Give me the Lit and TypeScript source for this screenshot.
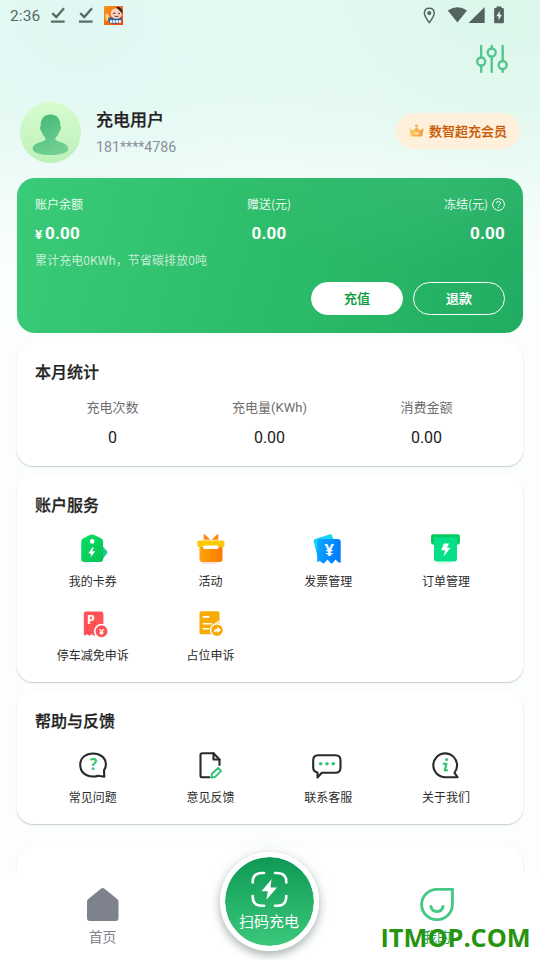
import { LitElement, html, css, svg, TemplateResult } from "lit";
import { customElement } from "lit/decorators.js";

interface Entry {
  label: string;
  icon: TemplateResult;
}

const icon = (body: TemplateResult) =>
  html`<svg class="icon" width="32" height="32" viewBox="0 0 32 32" fill="none">${body}</svg>`;

const services: Entry[] = [
  {
    label: "我的卡券",
    icon: icon(svg`
      <defs>
        <linearGradient id="tag" x1="0" y1="0" x2="1" y2="1"><stop stop-color="#05df68"/><stop offset="1" stop-color="#0bc252"/></linearGradient>
        <linearGradient id="tagShade" x1="0" y1="0" x2="1" y2="0"><stop stop-color="#9cc9ff" stop-opacity=".55"/><stop offset="1" stop-color="#fff" stop-opacity="0"/></linearGradient>
      </defs>
      <path d="M6 28h18l-4 3H9z" fill="url(#tagShade)"/>
      <path d="M25 12.500l5 5.500q.9 1.200 0 2.400L26.500 25q-1 1.500-2.500 2z" fill="#17cf92"/>
      <path d="M13.300 1.800q1.700-.8 3.400 0l7.500 3.700q1.900 1 1.900 3V26q0 3-3 3H7.200q-3 0-3-3V8.500q0-2 1.900-3z" fill="url(#tag)"/>
      <circle cx="15.200" cy="8.400" r="2.300" fill="#fff"/>
      <path d="M15.300 14.500l-4 6h3l-1 4 5-6.300h-3.200l1.800-3.700z" fill="#fff"/>`),
  },
  {
    label: "活动",
    icon: icon(svg`
      <defs><linearGradient id="gift" x1="0" y1="0" x2="1" y2="0"><stop stop-color="#ffa30c"/><stop offset="1" stop-color="#ff7a00"/></linearGradient></defs>
      <path d="M6 28h18l-4 3H8z" fill="#ffb7b0" opacity=".4"/>
      <path d="M8.700 1.600q0-1 .9-.4L15.500 6.800H8.700zM23.300 1.600q0-1-.9-.4L16.500 6.800h6.800z" fill="#ff8a12"/>
      <path d="M4.500 11h23v15q0 3-3 3h-17q-3 0-3-3z" fill="url(#gift)"/>
      <rect x="2.400" y="7.500" width="27" height="6.600" rx="1.500" fill="#ffc904"/>
      <rect x="8" y="12.500" width="15.600" height="3.500" rx="1.700" fill="#fff"/>`),
  },
  {
    label: "发票管理",
    icon: icon(svg`
      <defs><linearGradient id="bill" x1="0" y1="0" x2="1" y2=".3"><stop stop-color="#0fa9ff"/><stop offset="1" stop-color="#007dff"/></linearGradient></defs>
      <path d="M2.900 6L17.500 1.400q2-.5 2.700 1.300L25 18 6.500 28.500 1.700 8.500q-.4-1.900 1.200-2.500z" fill="#17d5f5"/>
      <path d="M9 6h16.700q3 0 3 3v20.800l-2-.4-3.200-3-3.100 3.800h-1.700l-3.200-3.800-3.200 3.800h-1.700l-3.100-2.500-1.400 1.200-.9-.2V9q0-3 2.800-3z" fill="url(#bill)"/>
      <text class="yen" x="17.200" y="22.800" font-size="16.500">¥</text>`),
  },
  {
    label: "订单管理",
    icon: icon(svg`
      <path d="M6 28h19l-8 3.500H8z" fill="#b7f7dd" opacity=".45"/>
      <path d="M2.900 1.300h25q2 0 2 2v5.500q0 3-3 3H4q-3 0-3-3V3.300q0-2 1.900-2z" fill="#05cb5c"/>
      <path d="M4 4.300h23v21.500q0 2.700-2.700 2.700H6.700Q4 28.500 4 25.800z" fill="#05df87"/>
      <path d="M14 10.500h5l-2 4.300h3.600l-7 8.700 1.500-6.200h-4z" fill="#fff"/>`),
  },
  {
    label: "停车减免申诉",
    icon: icon(svg`
      <path d="M9 4.500h15q2.400 0 2.400 2.400V28l-2-.5-2.300 1.300-2.400-1.300-2.500 1.300-2.400-1.500-2.400 1.500-2.300-1.500-2 1.200-1.300-.4V6.900q0-2.400 2.200-2.400z" fill="#ff5257"/>
      <text class="mark" x="13.800" y="17.300" font-size="12.500">P</text>
      <circle cx="24.500" cy="24.300" r="6.800" fill="#ff5257" stroke="#fff" stroke-width="1.700"/>
      <text class="mark" x="24.500" y="27.600" font-size="9">¥</text>`),
  },
  {
    label: "占位申诉",
    icon: icon(svg`
      <rect x="4.500" y="4.200" width="20" height="23" rx="2" fill="#f8aa05"/>
      <path d="M8.300 9.900h5.400M8.300 16.700h8M8.300 21.700h5.500" stroke="#fff" stroke-width="1.600" stroke-linecap="round"/>
      <path d="M24.500 13.500l-5 2h5.200z" fill="#fff"/>
      <circle cx="22" cy="23.200" r="6.500" fill="#f8aa05" stroke="#fff" stroke-width="1.400"/>
      <path d="M18.700 25.800q.3-4 3.600-4v-2l3.700 3.200-3.700 3v-1.800q-2.200 0-3.600 1.600z" fill="#fff"/>`),
  },
];

const help: Entry[] = [
  {
    label: "常见问题",
    icon: icon(svg`
      <path class="ink" d="M27.300 27.800l-6.200-1.100Q18.800 27.700 16 27.500 3.300 26.400 3.200 15.400C3.600 8.200 9.200 4.500 16.100 4.500s12.800 4.200 12.800 10.900q0 3.200-1.900 6z"/>
      <text class="leaf" x="16.400" y="21.300" font-size="15.500">?</text>`),
  },
  {
    label: "意见反馈",
    icon: icon(svg`
      <path class="ink" d="M14.500 28.300H7.300q-1.800 0-1.800-1.800V6q0-1.700 1.700-1.700H18.500l6 6.200V16"/>
      <path class="ink" d="M18.500 4.300v6.200h6"/>
      <path d="M16.500 28.500l.4-3.800 6.200-5.800 3 3-6.200 6.200z" stroke="#35c574" stroke-width="2" stroke-linejoin="round"/>`),
  },
  {
    label: "联系客服",
    icon: icon(svg`
      <path class="ink" d="M6 6.200h17.500q5 0 5 5v7.600q0 5-5 5H9.800L5.500 28.500v-5Q1.200 22.500 1.200 18.800v-7.600q0-5 4.800-5z"/>
      <g fill="#35c574"><circle cx="8.700" cy="14.800" r="1.800"/><circle cx="15" cy="14.800" r="1.800"/><circle cx="21.300" cy="14.800" r="1.800"/></g>`),
  },
  {
    label: "关于我们",
    icon: icon(svg`
      <path class="ink" d="M27.500 28.200H15.300A11.900 11.900 0 1 1 27.100 16.300q0 4-2.600 7.600z"/>
      <circle cx="16.600" cy="10.500" r="1.600" fill="#35c574"/>
      <path d="M13.700 14.800h2.700l-1.600 6.500h2.200" stroke="#35c574" stroke-width="2.200" stroke-linecap="round" stroke-linejoin="round"/>`),
  },
];

const stats = [
  { label: "充电次数", value: "0" },
  { label: "充电量(KWh)", value: "0.00" },
  { label: "消费金额", value: "0.00" },
];

const doneIcon = html`<svg class="done" width="16" height="18" viewBox="0 0 16 18" fill="none">
  <path d="M2.300 7.200l4 3.800L14 2.200" stroke="#5a6763" stroke-width="2.300"/><path d="M1 15.600h13.600" stroke="#5a6763" stroke-width="2.200"/>
</svg>`;

@customElement("app-root")
export class AppRoot extends LitElement {
  static styles = css`
    :host {
      display: flex;
      flex-direction: column;
      position: relative;
      box-sizing: border-box;
      width: 540px;
      height: 960px;
      overflow: hidden;
      font-family: Roboto, "Noto Sans CJK SC", sans-serif;
      color: #222;
      background:
        radial-gradient(ellipse 330px 250px at 80px 20px, #dff7f2 0%, #dff7f200 100%),
        radial-gradient(ellipse 360px 270px at 510px 0px, #dbf6ea 0%, #dbf6ea00 100%),
        linear-gradient(#ecfcf7 0, #eefcf8 110px, #f8fefc 200px, #fcfefe 330px, #fcfdfe 100%);
    }
    svg { display: block; flex: none; }
    .status { display: flex; align-items: center; height: 31px; padding: 0 35px 0 10px; flex: none; }
    .time { font-size: 15.500px; color: #5a6763; width: 40px; letter-spacing: .1px; }
    .done { margin-top: -2px; }
    .done + .done { margin: -2px 10px 0 12px; }
    .grow { flex: 1; }
    .tools { box-sizing: border-box; display: flex; justify-content: flex-end; padding: 12px 31px 0 0; height: 70px; flex: none; }
    .profile { display: flex; align-items: center; height: 63px; padding: 0 20px; flex: none; }
    .who { flex: 1; margin-left: 15px; }
    .name { font: 500 17px/24px "Noto Sans CJK SC", sans-serif; margin-top: -2px; -webkit-text-stroke: .25px; }
    .phone { font-size: 14.200px; line-height: 18px; color: #8b8f99; margin-top: 7px; }
    .member {
      display: flex; align-items: center; gap: 5px; box-sizing: border-box;
      width: 124px; height: 36px; padding-left: 13px; margin-top: -3px; border-radius: 18px;
      background: #fff0dc; color: #c85a05; font: 500 13px/20px "Noto Sans CJK SC", sans-serif; white-space: nowrap;
      -webkit-text-stroke: .2px;
    }
    .wallet {
      box-sizing: border-box; height: 155px; margin: 14px 17px 0; padding: 16px 18px 18px; border-radius: 18px; flex: none;
      color: #fff;
      background:
        radial-gradient(ellipse 200px 90px at 80% 0, rgba(60,190,122,.55), rgba(60,190,122,0)),
        linear-gradient(105deg, #3acb79 0%, #2cbc69 52%, #22ac62 100%);
    }
    .triple { display: grid; grid-template-columns: 1fr 1fr 1fr; }
    .triple > :nth-child(1) { text-align: left; }
    .triple > :nth-child(2) { text-align: center; margin-left: -2px; }
    .triple > :nth-child(3) { text-align: right; justify-content: flex-end; }
    .captions { font: 12px/20px "Noto Sans CJK SC", sans-serif; color: #ffffffeb; }
    .frozen { display: flex; align-items: center; gap: 4px; }
    .amounts { font-weight: 700; font-size: 17px; line-height: 22px; height: 22px; margin-top: 8px; letter-spacing: .2px; }
    .unit { font-size: 13.500px; margin-right: 2.500px; }
    .saved { font: 12px/20px "Noto Sans CJK SC", sans-serif; color: #ffffffb8; margin-top: 6px; letter-spacing: .08px; }
    .actions { display: flex; justify-content: flex-end; gap: 10px; margin-top: 12px; }
    .button {
      box-sizing: border-box; width: 92px; height: 33px; border: 1px solid #fff; border-radius: 17px;
      text-align: center; font: 500 13px/30px "Noto Sans CJK SC", sans-serif; -webkit-text-stroke: .2px;
    }
    .solid { background: #fff; color: #0b9d3d; }
    .card {
      box-sizing: border-box; margin: 10px 17px 0; padding: 16px 18px 0; border-radius: 16px; background: #fff; flex: none;
      box-shadow: 0 1px 1.500px rgba(30, 45, 50, .24);
    }
    .heading { font: 500 16px/24px "Noto Sans CJK SC", sans-serif; -webkit-text-stroke: .25px; }
    .month { height: 123px; }
    .account { height: 206px; }
    .support { height: 132px; }
    .more { height: 130px; margin-top: 23px; }
    .stats { display: grid; grid-template-columns: repeat(3, 1fr); margin: 15px 0 0 -1px; text-align: center; }
    .stat-label { font-size: 13px; line-height: 20px; color: #6d6d6d; }
    .stat-value { font-size: 16px; line-height: 20px; margin-top: 10px; }
    .entries { display: grid; grid-template-columns: repeat(4, 1fr); grid-auto-rows: 74px; margin: 17px 0 0 -1px; }
    .entry { display: flex; flex-direction: column; align-items: center; }
    .entry-label { font: 12px/20px "Noto Sans CJK SC", sans-serif; color: #2c2c2c; margin-top: 6px; white-space: nowrap; }
    .ink { stroke: #272b2a; stroke-width: 2.100; stroke-linejoin: round; stroke-linecap: round; }
    .yen, .mark, .leaf { font-family: "Noto Sans", sans-serif; font-weight: 700; text-anchor: middle; fill: #fff; }
    .leaf { fill: #35c574; }
    .nav {
      position: absolute; left: 0; right: 0; bottom: 0; height: 87px; background: #fff;
      display: grid; grid-template-columns: 205px 129px 206px;
    }
    .tab { display: flex; flex-direction: column; align-items: center; padding-top: 14px; gap: 3px;
      font: 13.800px/22px "Noto Sans CJK SC", sans-serif; color: #7e828d; }
    .mine { color: #1ba765; }
    .scan {
      position: absolute; left: 220px; top: 852px; width: 99px; height: 99px; box-sizing: border-box;
      border: 5px solid #fff; border-radius: 50%;
      background: linear-gradient(#0f9955, #3bc87b) padding-box;
      box-shadow: 0 4px 9px rgba(20, 40, 30, .32), 0 0 14px 2px rgba(100, 170, 140, .1);
      display: flex; flex-direction: column; align-items: center; padding-top: 14px;
      color: #fff; font: 15px/22px "Noto Sans CJK SC", sans-serif; white-space: nowrap;
    }
    .scan-label { margin: 2px 1px 0 0; }
    .site { position: absolute; left: 380.500px; top: 919.500px; font: 700 25.300px/34px "Open Sans", "Noto Sans", sans-serif; color: #27940f; white-space: nowrap; }
  `;

  private entries(list: Entry[]) {
    return html`<div class="entries">
      ${list.map((e) => html`<div class="entry">${e.icon}<div class="entry-label">${e.label}</div></div>`)}
    </div>`;
  }

  private statusBar() {
    return html`<div class="status">
      <span class="time">2:36</span>${doneIcon}${doneIcon}
      <svg width="19" height="19" viewBox="0 0 19 19">
        <defs><linearGradient id="app" x1="0" y1="0" x2="1" y2="1"><stop stop-color="#f79a1c"/><stop offset="1" stop-color="#f0420c"/></linearGradient></defs>
        <rect width="19" height="19" fill="url(#app)"/>
        <path d="M1 9l3-2 2 6-4 2z" fill="#ffcb83"/>
        <path d="M4 12l5-1 8 0 1 4-5 3-8-1z" fill="#31619b"/>
        <ellipse cx="12.300" cy="7.500" rx="5.700" ry="5.300" fill="#fbd3bd"/>
        <path d="M12 1.600q2-1.600 4 0 3 2 2.300 6.400L16 5z" fill="#33201d"/>
        <path d="M9 7.500l2.500-.5M14 7l2 .8M10.500 10q2 1.400 4 0" stroke="#6e2520" stroke-width="1" fill="none"/>
        <path d="M6 15.500h11" stroke="#fff" stroke-width="2.600" stroke-dasharray="2.400 .6"/>
      </svg>
      <span class="grow"></span>
      <svg width="82" height="20" viewBox="0 0 82 20" fill="#56645f">
        <path d="M6.300 2.300q4.900 0 4.900 5 0 3-4.900 9.300Q1.400 10.300 1.400 7.300q0-5 4.900-5z" fill="none" stroke="#56645f" stroke-width="1.500"/>
        <circle cx="6.300" cy="7.100" r="2.100"/>
        <path d="M24.800 4.500q9.700-6.500 19.200 0L34.400 16.600z"/>
        <path d="M61.700 1v16H45.500z"/>
        <path d="M73.500 .6h5v1.500h1.400q1 0 1 1v13.200q0 1-1 1h-7.800q-1 0-1-1V3.100q0-1 1-1h1.400z"/>
        <path d="M76.700 4.900l-3.300 5.400h2.200v4l3.200-5.500h-2.100z" fill="#e7fbf3"/>
      </svg>
    </div>`;
  }

  render() {
    return html`
      ${this.statusBar()}
      <div class="tools">
        <svg width="34" height="32" viewBox="0 0 34 32" fill="none" stroke="#52c389" stroke-width="2.300" stroke-linecap="round">
          <path d="M6.200 3v11M6.200 23v6M16.700 3v2M16.700 14v15M27.700 3v14.500M27.700 26.500V29"/>
          <circle cx="6.200" cy="18.500" r="4"/><circle cx="16.700" cy="9.500" r="4"/><circle cx="27.700" cy="22" r="4"/>
        </svg>
      </div>
      <div class="profile">
        <svg width="61" height="61" viewBox="0 0 61 61">
          <defs>
            <linearGradient id="disc" x1="0" y1="0" x2="0" y2="1"><stop stop-color="#d6fcce"/><stop offset="1" stop-color="#bdf0ba"/></linearGradient>
            <linearGradient id="person" x1="0" y1="0" x2=".4" y2="1"><stop stop-color="#40b877"/><stop offset="1" stop-color="#70cf91"/></linearGradient>
          </defs>
          <circle cx="30.500" cy="30.500" r="30.500" fill="url(#disc)"/>
          <path d="M30.500 12.500c6 0 9.700 4 9.700 10q0 2 .9 3-.3 3-1.900 4.500c-1 4-4 5-3.900 7.300 1 3 13 3.200 13 9.500 0 4-8.800 6.300-17.800 6.300s-17.800-2.300-17.800-6.300c0-6.300 12-6.500 13-9.500.1-2.300-2.900-3.300-3.900-7.300q-1.600-1.500-1.900-4.500.9-1 .9-3c0-6 3.700-10 9.700-10z" fill="url(#person)"/>
        </svg>
        <div class="who">
          <div class="name">充电用户</div>
          <div class="phone">181****4786</div>
        </div>
        <div class="member">
          <svg width="15" height="14" viewBox="0 0 15 14">
            <defs><linearGradient id="crown"><stop stop-color="#ffc85c"/><stop offset="1" stop-color="#ee9a42"/></linearGradient></defs>
            <circle cx="7.500" cy="2" r="1.400" fill="#f7b04c"/>
            <path d="M.4 4.300l3.700 2.200L7.500 3l3.400 3.500 3.800-2.200-1.500 8.300H1.900z" fill="url(#crown)"/>
            <path d="M5 8.300q2.500 2.800 5 0" stroke="#fff3d8" stroke-width="1.200" fill="none"/>
          </svg>
          <span>数智超充会员</span>
        </div>
      </div>

      <div class="wallet">
        <div class="triple captions">
          <div>账户余额</div>
          <div>赠送(元)</div>
          <div class="frozen"><span>冻结(元)</span>
            <svg width="13" height="13" viewBox="0 0 13 13" fill="none" stroke="#fff">
              <circle cx="6.500" cy="6.500" r="5.900"/><path d="M4.500 5.300q0-2 2-2t2 1.800q0 1-1.200 1.700-.8.500-.8 1.300M6.500 9.100v1"/>
            </svg>
          </div>
        </div>
        <div class="triple amounts">
          <div><span class="unit">¥</span>0.00</div>
          <div>0.00</div>
          <div>0.00</div>
        </div>
        <div class="saved">累计充电0KWh，节省碳排放0吨</div>
        <div class="actions">
          <div class="button solid">充值</div>
          <div class="button">退款</div>
        </div>
      </div>

      <div class="card month">
        <div class="heading">本月统计</div>
        <div class="stats">
          ${stats.map((s) => html`<div><div class="stat-label">${s.label}</div><div class="stat-value">${s.value}</div></div>`)}
        </div>
      </div>
      <div class="card account">
        <div class="heading">账户服务</div>
        ${this.entries(services)}
      </div>
      <div class="card support">
        <div class="heading">帮助与反馈</div>
        ${this.entries(help)}
      </div>
      <div class="card more"></div>

      <div class="nav">
        <div class="tab">
          <svg width="33" height="35" viewBox="0 0 33 35">
            <path d="M15.200 1.600q1.500-1.200 3 0L31.500 12.200q1 1 1 2.500V31q0 3-3 3H4q-3 0-3-3V14.700q0-1.500 1-2.500z" fill="#7e828d"/>
          </svg>
          <span>首页</span>
        </div>
        <div></div>
        <div class="tab mine">
          <svg width="35" height="35" viewBox="0 0 35 35" fill="none" stroke="#46c985" stroke-width="2.900" stroke-linecap="round">
            <path d="M17 2.400H32.400V17.500A15.400 15.100 0 1 1 17 2.400z"/>
            <path d="M11 19.500q.8 5 6 5t6-5" stroke-width="3"/>
          </svg>
          <span>我的</span>
        </div>
      </div>
      <div class="scan">
        <svg width="37" height="37" viewBox="0 0 37 37" fill="none" stroke="#fff" stroke-width="2.600" stroke-linecap="round">
          <path d="M1.700 11.500V11Q1.700 2 10.700 2h2.300M24 2h2.300q9 0 9 9v.5M35.300 25v.7q0 9-9 9H24M13 34.700h-2.300q-9 0-9-9V25"/>
          <path d="M20.500 8.300l-10 12h6.300l-1.400 8.500 10.600-12.300h-6.500z" fill="#fff" stroke="none"/>
        </svg>
        <span class="scan-label">扫码充电</span>
      </div>
      <div class="site">ITMOP.COM</div>
    `;
  }
}
